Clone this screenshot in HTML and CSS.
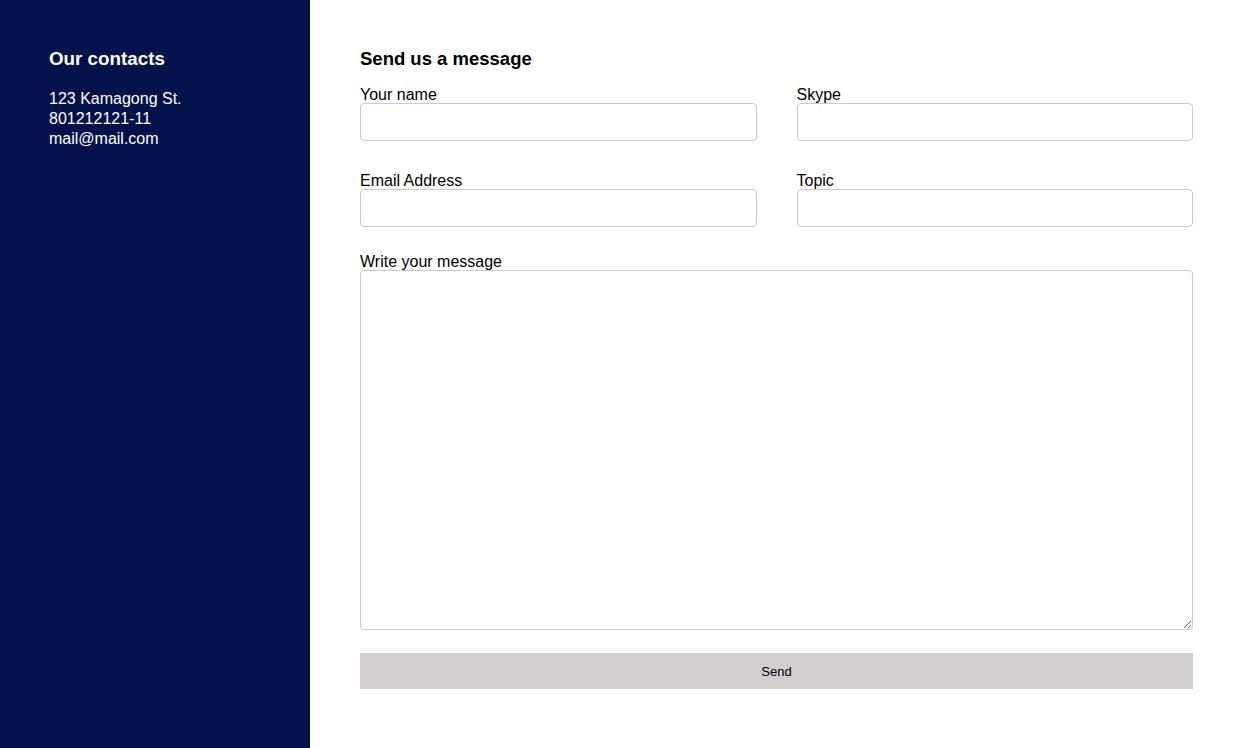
FILE: index.html
```html
<!DOCTYPE html>
<html lang="en">
<head>
<meta charset="utf-8">
<title>Contact</title>
<link rel="stylesheet" href="styles.css">
</head>
<body>
<div class="page">
  <aside class="sidebar">
    <h2 class="side-title">Our contacts</h2>
    <div class="side-info">
      <div>123 Kamagong St.</div>
      <div>801212121-11</div>
      <div>mail@mail.com</div>
    </div>
  </aside>
  <main class="main">
    <h2 class="main-title">Send us a message</h2>
    <form class="form">
      <div class="grid">
        <div class="field">
          <label class="label">Your name</label>
          <input class="input" type="text">
        </div>
        <div class="field">
          <label class="label">Skype</label>
          <input class="input" type="text">
        </div>
        <div class="field">
          <label class="label">Email Address</label>
          <input class="input" type="text">
        </div>
        <div class="field">
          <label class="label">Topic</label>
          <input class="input" type="text">
        </div>
      </div>
      <div class="field message">
        <label class="label">Write your message</label>
        <textarea class="textarea"></textarea>
      </div>
      <button class="send" type="button">Send</button>
    </form>
  </main>
</div>
</body>
</html>
```

FILE: styles.css
```css
* { box-sizing: border-box; }
html, body { margin: 0; padding: 0; height: 100%; }
body {
  font-family: "Liberation Sans", Arial, sans-serif;
  color: #000;
  background: #fff;
}
.page {
  display: flex;
  height: 748px;
}
.sidebar {
  width: 310px;
  flex: 0 0 310px;
  background: #03124a;
  color: #fff;
  padding: 48px 49px 0;
}
.side-title {
  margin: 0 0 19px;
  font-size: 18.8px;
  line-height: 22px;
  font-weight: bold;
}
.side-info {
  font-size: 16px;
  line-height: 20px;
}
.main {
  flex: 1;
  padding: 48px 47px 0 50px;
}
.main-title {
  margin: 0 0 15px;
  font-size: 18.5px;
  line-height: 22px;
  font-weight: bold;
}
.grid {
  display: grid;
  grid-template-columns: 1fr 1fr;
  column-gap: 40px;
  row-gap: 30px;
}
.field {
  display: flex;
  flex-direction: column;
}
.label {
  font-size: 16px;
  line-height: 16px;
  padding-top: 2px;
}
.input {
  height: 38px;
  border: 1px solid #c9c9c9;
  border-radius: 4px;
  font: inherit;
  padding: 0 10px;
  background: #fff;
}
.message { margin-top: 25px; }
.textarea {
  height: 360px;
  border: 1px solid #c9c9c9;
  border-radius: 4px;
  font: inherit;
  padding: 8px 10px;
  resize: vertical;
}
.send {
  display: block;
  width: 100%;
  margin-top: 23px;
  height: 36px;
  border: none;
  background: #cfcdce;
  font-family: "Liberation Sans", Arial, sans-serif;
  font-size: 13px;
  color: #000;
}
```
